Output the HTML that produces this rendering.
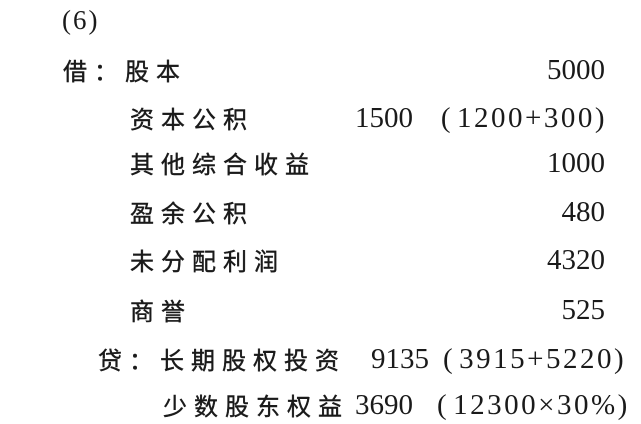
<!DOCTYPE html>
<html><head><meta charset="utf-8"><style>
html,body{margin:0;padding:0;background:#fff;}
body{width:641px;height:424px;position:relative;overflow:hidden;font-family:"Liberation Serif","Noto Serif CJK SC","Noto Sans CJK SC",serif;color:#1a1a1a;}
.t{position:absolute;font-size:24px;line-height:30px;white-space:nowrap;letter-spacing:7px;font-family:"Noto Sans CJK SC",sans-serif;-webkit-text-stroke:0.4px #1a1a1a;}
.n{position:absolute;font-size:29px;line-height:30px;white-space:nowrap;}
.p{letter-spacing:2.5px;}
.p b{font-weight:normal;margin-right:4px;}
.r{right:36px;text-align:right;}
</style></head><body>
<div class="n" style="left:62px;top:5px;font-size:27px;letter-spacing:2px">(6)</div>
<div class="t" style="left:63px;top:55px">借：股本</div>
<div class="n r" style="top:55px">5000</div>
<div class="t" style="left:130px;top:103px">资本公积</div>
<div class="n" style="left:355px;top:103px">1500</div>
<div class="n p r" style="top:103px;right:34px"><b>(</b>1200+300)</div>
<div class="t" style="left:130px;top:148px">其他综合收益</div>
<div class="n r" style="top:148px">1000</div>
<div class="t" style="left:130px;top:197px">盈余公积</div>
<div class="n r" style="top:197px">480</div>
<div class="t" style="left:130px;top:245px">未分配利润</div>
<div class="n r" style="top:245px">4320</div>
<div class="t" style="left:130px;top:295px">商誉</div>
<div class="n r" style="top:295px">525</div>
<div class="t" style="left:98px;top:344px">贷：长期股权投资</div>
<div class="n" style="left:371px;top:344px">9135</div>
<div class="n p" style="left:443px;top:344px"><b>(</b>3915+5220)</div>
<div class="t" style="left:163px;top:390px">少数股东权益</div>
<div class="n" style="left:355px;top:390px">3690</div>
<div class="n p" style="left:437px;top:390px"><b>(</b>12300×30%)</div>
</body></html>
